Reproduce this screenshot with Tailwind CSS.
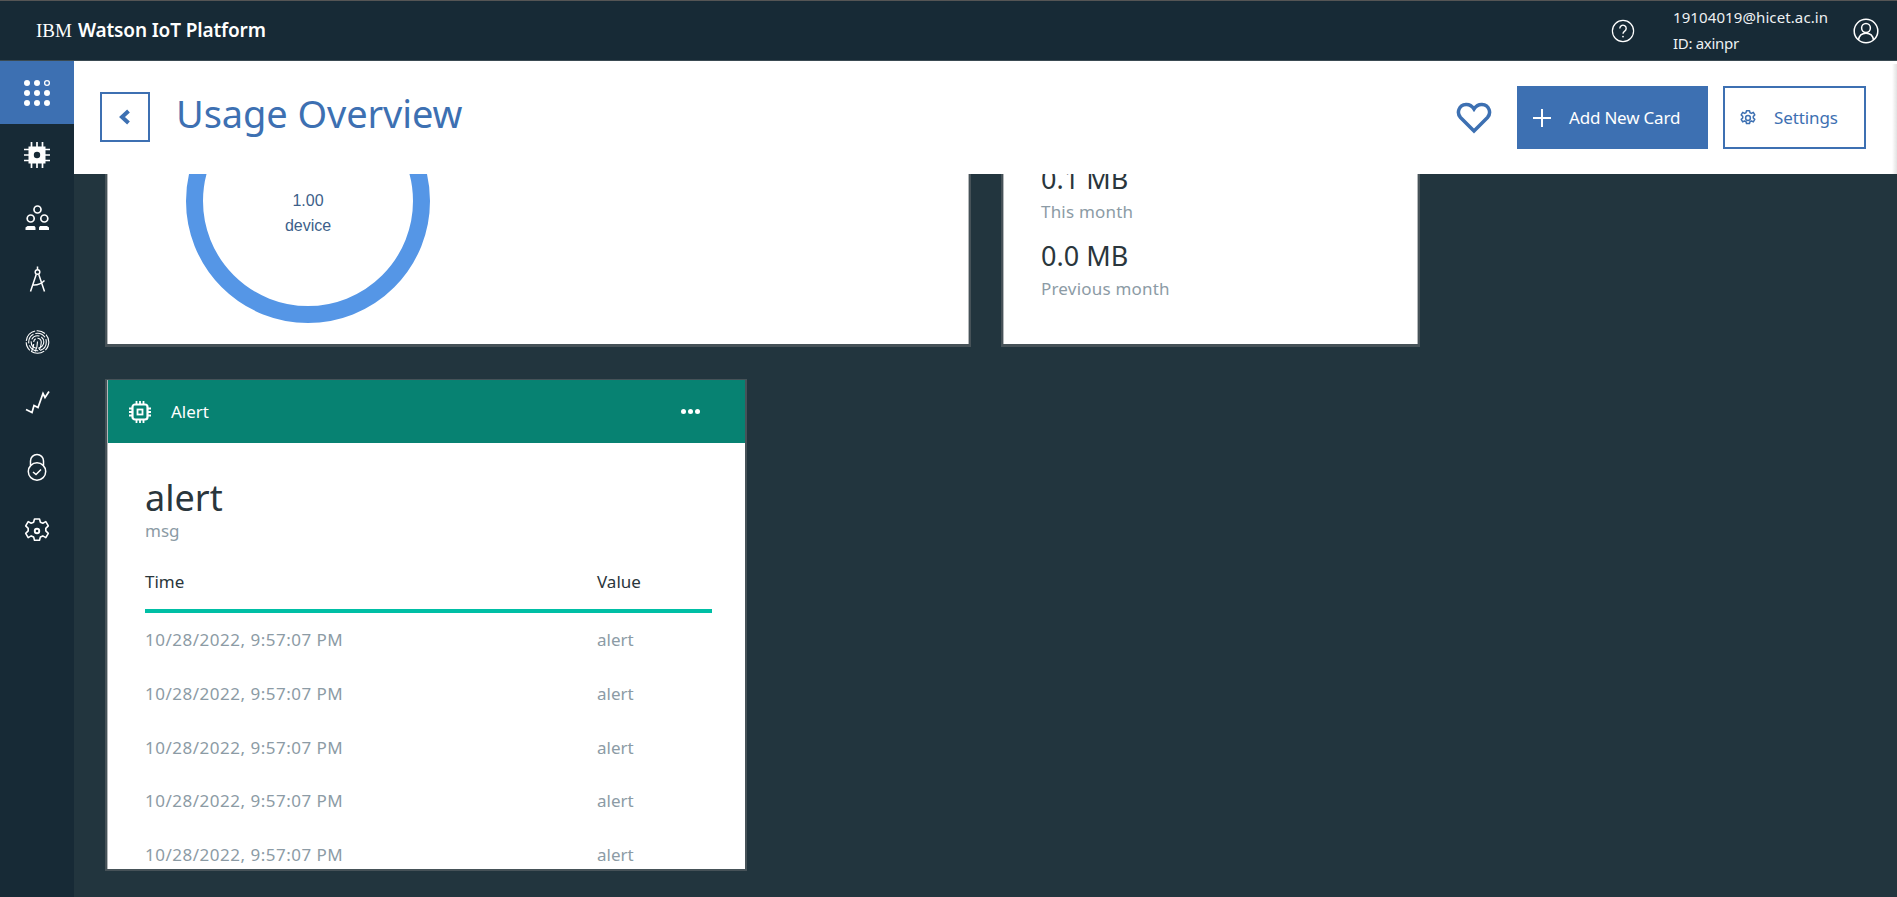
<!DOCTYPE html>
<html>
<head>
<meta charset="utf-8">
<script src="https://cdn.jsdelivr.net/npm/@tailwindcss/browser@4"></script>
</head>
<body class="m-0 overflow-hidden">
<div class="flex h-[897px] w-[1897px] flex-col bg-[#22353e] font-['Noto_Sans',sans-serif] text-[17px]">
  <!-- Top bar -->
  <header class="flex h-[61px] shrink-0 items-center border-t border-b border-t-[#555] border-b-[#3a4a52] bg-[#172a36] text-white">
    <div class="ml-[36px] flex items-center text-[19px] leading-none">
      <span class="font-['Liberation_Serif',serif] text-[19px]">IBM</span>
      <span class="ml-[6px] font-semibold tracking-[-0.13px]">Watson IoT Platform</span>
    </div>
    <div class="ml-auto flex items-center">
      <svg class="h-[24px] w-[24px]" viewBox="0 0 24 24" fill="none" stroke="white" stroke-width="1.2"><circle cx="12" cy="12" r="10.6"/><path d="M8.8 9.4a3.2 3.2 0 1 1 4.9 2.7c-1.1.7-1.7 1.3-1.7 2.6" stroke-width="1.4"/><circle cx="12" cy="17.6" r="0.9" fill="white" stroke="none"/></svg>
      <div class="mb-[2px] ml-[38px] w-[163px] text-[15px] leading-[26px] text-[#eef1f3]">
        <div class="tracking-[0.1px]">19104019@hicet.ac.in</div>
        <div class="tracking-[-0.3px]">ID: axinpr</div>
      </div>
      <svg class="ml-[17px] mr-[18px] h-[26px] w-[26px]" viewBox="0 0 26 26" fill="none" stroke="white" stroke-width="1.5"><circle cx="13" cy="13" r="11.8"/><circle cx="13" cy="10" r="4.4"/><path d="M5.5 22c.6-4.500 3.500-6.700 7.500-6.700s6.900 2.200 7.500 6.700"/></svg>
    </div>
  </header>

  <div class="flex min-h-0 flex-1">
    <!-- Sidebar -->
    <nav class="w-[74px] shrink-0 bg-[#172a36]">
      <div class="flex h-[63px] items-center justify-center bg-[#3d70b2]">
        <svg class="h-[30px] w-[30px]" viewBox="0 0 30 30" fill="white"><circle cx="5" cy="5" r="3"/><circle cx="15" cy="5" r="3"/><circle cx="25" cy="5" r="2.4" fill="none" stroke="white" stroke-width="1.300"/><circle cx="5" cy="15" r="3"/><circle cx="15" cy="15" r="3"/><circle cx="25" cy="15" r="3"/><circle cx="5" cy="25" r="3"/><circle cx="15" cy="25" r="3"/><circle cx="25" cy="25" r="3"/></svg>
      </div>
      <div class="flex h-[62px] items-center justify-center">
        <svg class="h-[30px] w-[30px]" viewBox="0 0 30 30"><path d="M2 9.500h26M2 15h26M2 20.500h26M9.500 2v26M15 2v26M20.500 2v26" stroke="white" stroke-width="1.700"/><rect x="6.500" y="6.500" width="17" height="17" fill="white"/><circle cx="15" cy="15" r="3.200" fill="#172a36"/></svg>
      </div>
      <div class="flex h-[63px] items-center justify-center">
        <svg class="h-[30px] w-[30px]" viewBox="0 0 30 30" fill="none" stroke="white" stroke-width="1.700"><circle cx="15.500" cy="6.500" r="3.500"/><circle cx="8.700" cy="15.500" r="3.500"/><circle cx="22.300" cy="15.500" r="3.500"/><path d="M3.500 27v-2.500l2-1.500h7l1 1.500V27zM17 27v-2.500l1-1.500h7l2 1.500V27z" fill="white" stroke="none"/></svg>
      </div>
      <div class="flex h-[62px] items-center justify-center">
        <svg class="h-[30px] w-[30px]" viewBox="0 0 30 30" fill="none" stroke="white" stroke-width="1.500"><circle cx="15.500" cy="7" r="2.300"/><path d="M15.500 1.500v3M14.300 9.200 8.500 26.500M16.700 9.200l5.800 17.300M11 20c4 .3 8-1 11.500-4.500"/></svg>
      </div>
      <div class="flex h-[63px] items-center justify-center">
        <svg class="h-[30px] w-[30px]" viewBox="0 0 30 30" fill="none" stroke="white" stroke-width="1.100"><circle cx="15.500" cy="14" r="11.300" stroke-dasharray="9 1.500 14 1.500"/><circle cx="15.500" cy="14" r="8.800" stroke-dasharray="11 2"/><circle cx="15.500" cy="14" r="6.300" stroke-dasharray="9 2"/><path d="M15.500 10.200a3.800 3.800 0 0 1 3.800 3.800c0 3-.8 5.500-2 8M11.700 14a3.800 3.800 0 0 1 2-3.300M11.700 16c0 2.500-.8 5-2 7M15.500 13.500c0 3.500-.7 7-2.300 10"/></svg>
      </div>
      <div class="flex h-[62px] items-center justify-center">
        <svg class="h-[30px] w-[30px]" viewBox="0 0 30 30" fill="none" stroke="white" stroke-width="1.700"><path d="M4 19.500l6 3 2-7 4 2 5-14 2 4 4-6"/></svg>
      </div>
      <div class="flex h-[63px] items-center justify-center">
        <svg class="h-[30px] w-[30px]" viewBox="0 0 30 30" fill="none" stroke="white" stroke-width="1.500"><circle cx="15" cy="18.500" r="8.700"/><path d="M8.500 12.500V8a6.500 6.500 0 0 1 13 0v4.500"/><path d="M11 19l3 2.500 5-5"/></svg>
      </div>
      <div class="flex h-[62px] items-center justify-center">
        <svg class="h-[30px] w-[30px]" viewBox="0 0 30 30" fill="none" stroke="white" stroke-width="1.600" stroke-linejoin="round"><path d="M12.500 3h5l.9 3.300 2.400 1 3-1.700 2.500 4.300-2.500 2.400v2.600l2.500 2.400-2.500 4.300-3-1.700-2.400 1-.9 3.300h-5l-.9-3.300-2.400-1-3 1.700-2.500-4.300 2.500-2.400v-2.600L3.700 9.900l2.500-4.300 3 1.700 2.400-1z" transform="translate(0 1)"/><circle cx="15" cy="16" r="3.200" fill="white" stroke="none"/><circle cx="15" cy="16" r="1.300" fill="#172a36" stroke="none"/></svg>
      </div>
    </nav>

    <main class="flex min-w-0 flex-1 flex-col">
      <!-- Page header -->
      <div class="relative flex h-[113px] shrink-0 items-center bg-white text-[#3d70b2]">
        <div class="mb-[1px] ml-[26px] flex h-[50px] w-[50px] items-center justify-center border-2 border-[#3d70b2]">
          <svg class="h-[16px] w-[14px]" viewBox="0 0 14 16" fill="none" stroke="#3d70b2" stroke-width="4"><path d="M10.500 2 4 8l6.500 6"/></svg>
        </div>
        <h1 class="mb-[9px] ml-[26px] text-[38px] leading-none font-normal tracking-[-0.1px]">Usage Overview</h1>
        <svg class="ml-auto h-[32px] w-[36px]" viewBox="0 0 36 32" fill="none" stroke="#3d70b2" stroke-width="3.500"><path d="M18 29 4.500 15.500C.500 11 2.500 3 10 2.500c3.500-.2 6 1.500 8 4.500 2-3 4.500-4.700 8-4.500 7.500.5 9.500 8.500 5.500 13z"/></svg>
        <button class="ml-[25px] flex h-[63px] w-[191px] items-center bg-[#3d70b2] pl-[16px] text-white">
          <svg class="h-[18px] w-[18px]" viewBox="0 0 18 18" stroke="white" stroke-width="2"><path d="M9 0v18M0 9h18"/></svg>
          <span class="ml-[18px] tracking-[-0.2px]">Add New Card</span>
        </button>
        <button class="ml-[15px] mr-[31px] flex h-[63px] w-[143px] items-center border-2 border-[#3d70b2] pl-[14px]">
          <svg class="h-[18px] w-[18px]" viewBox="0 0 30 30" fill="none" stroke="#3d70b2" stroke-width="2.500" stroke-linejoin="round"><path d="M12.500 3h5l.9 3.300 2.400 1 3-1.700 2.500 4.300-2.500 2.400v2.600l2.500 2.400-2.500 4.300-3-1.700-2.400 1-.9 3.300h-5l-.9-3.300-2.400-1-3 1.700-2.500-4.300 2.500-2.400v-2.600L3.700 9.900l2.500-4.300 3 1.700 2.400-1z"/><circle cx="15" cy="15" r="4"/></svg>
          <span class="ml-[17px] tracking-[-0.1px]">Settings</span>
        </button>
        <div class="absolute inset-y-0 right-0 top-[3px] w-[5px] bg-linear-to-r from-white to-[#e2e2e2]"></div>
      </div>

      <!-- Scrolled dashboard -->
      <div class="min-h-0 flex-1 overflow-hidden pl-[31px]">
        <div class="flex gap-[30px]">
          <section class="h-[173px] w-[866px] overflow-hidden border-x-2 border-b-[3px] border-[#465258] bg-white shadow-[inset_1px_0_0_#b4b8ba,inset_-1px_0_0_#b4b8ba]">
            <div class="relative mt-[-95px] ml-[79px] h-[244px] w-[244px] text-[#3d5f8a]">
              <svg class="h-[244px] w-[244px]" viewBox="0 0 244 244" fill="none"><circle cx="122" cy="122" r="113.500" stroke="#5596e6" stroke-width="17"/></svg>
              <div class="absolute inset-x-0 top-[109px] text-center font-['Liberation_Sans',sans-serif] text-[16px] leading-[25px]">
                <div>1.00</div>
                <div>device</div>
              </div>
            </div>
          </section>
          <section class="h-[173px] w-[419px] overflow-hidden border-x-2 border-b-[3px] border-[#465258] bg-white pl-[38px] shadow-[inset_1px_0_0_#b4b8ba,inset_-1px_0_0_#b4b8ba]">
            <div class="mt-[-11px] text-[27px] leading-[32px] text-[#2a363c]">0.1 MB</div>
            <div class="mt-[6px] leading-[22px] tracking-[0.2px] text-[#8c9ba5]">This month</div>
            <div class="mt-[17px] text-[27px] leading-[32px] text-[#2a363c]">0.0 MB</div>
            <div class="mt-[6px] leading-[22px] tracking-[0.2px] text-[#8c9ba5]">Previous month</div>
          </section>
        </div>

        <section class="mt-[32px] h-[492px] w-[642px] overflow-hidden border-x-2 border-b-2 border-t border-[#465258] bg-white shadow-[inset_1px_0_0_#b4b8ba]">
          <div class="flex h-[63px] items-center border-l border-[#b4b8ba] bg-[#078272] pl-[20px] text-white">
            <svg class="h-[24px] w-[24px]" viewBox="0 0 24 24" fill="none" stroke="white" stroke-width="2.200"><rect x="4.500" y="4.500" width="15" height="15" rx="2.500"/><rect x="9.500" y="9.500" width="5" height="5" stroke-width="1.800"/><path d="M8.500 1v3M12 1v3M15.500 1v3M8.500 20v3M12 20v3M15.500 20v3M1 8.500h3M1 12h3M1 15.500h3M20 8.500h3M20 12h3M20 15.500h3" stroke-width="1.800"/></svg>
            <span class="ml-[19px]">Alert</span>
            <div class="ml-[472px] flex gap-[2px]">
              <span class="h-[5px] w-[5px] rounded-full bg-white"></span><span class="h-[5px] w-[5px] rounded-full bg-white"></span><span class="h-[5px] w-[5px] rounded-full bg-white"></span>
            </div>
          </div>
          <div class="pl-[38px] pr-[33px]">
            <div class="mt-[34px] text-[36px] leading-[42px] text-[#2a363c]">alert</div>
            <div class="leading-[24px] text-[#8c9ba5]">msg</div>
            <div class="mt-[22px] flex h-[48px] border-b-4 border-[#00bfa5] pt-[5px] leading-[24px] text-[#2a363c]">
              <span class="w-[452px]">Time</span><span>Value</span>
            </div>
            <div class="flex h-[53.75px] items-center text-[#8c9ba5]"><span class="w-[452px] tracking-[0.5px]">10/28/2022, 9:57:07 PM</span><span>alert</span></div>
            <div class="flex h-[53.75px] items-center text-[#8c9ba5]"><span class="w-[452px] tracking-[0.5px]">10/28/2022, 9:57:07 PM</span><span>alert</span></div>
            <div class="flex h-[53.75px] items-center text-[#8c9ba5]"><span class="w-[452px] tracking-[0.5px]">10/28/2022, 9:57:07 PM</span><span>alert</span></div>
            <div class="flex h-[53.75px] items-center text-[#8c9ba5]"><span class="w-[452px] tracking-[0.5px]">10/28/2022, 9:57:07 PM</span><span>alert</span></div>
            <div class="flex h-[53.75px] items-center text-[#8c9ba5]"><span class="w-[452px] tracking-[0.5px]">10/28/2022, 9:57:07 PM</span><span>alert</span></div>
          </div>
        </section>
      </div>
    </main>
  </div>
</div>
</body>
</html>
